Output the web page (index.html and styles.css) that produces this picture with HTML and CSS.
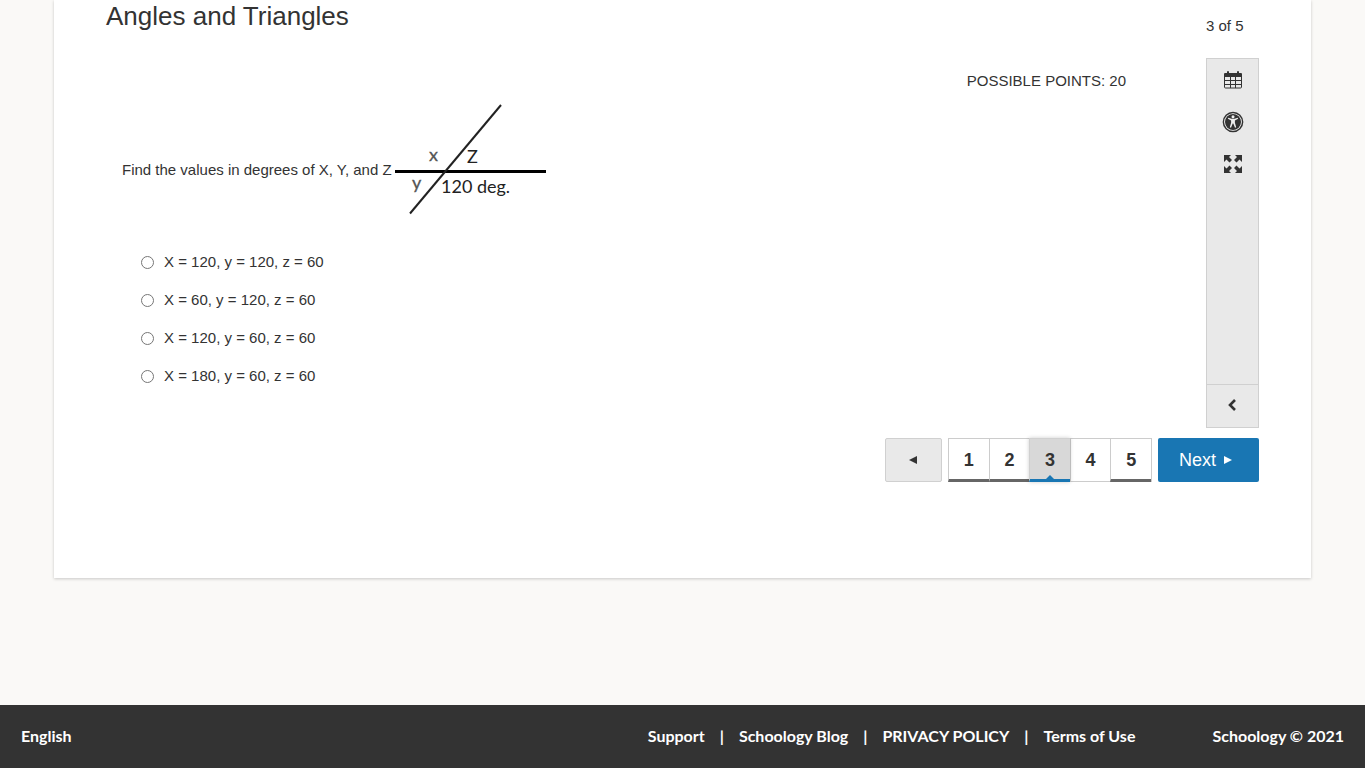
FILE: index.html
```html
<!DOCTYPE html>
<html lang="en">
<head>
    <meta charset="UTF-8">
    <meta name="viewport" content="width=device-width, initial-scale=1.0">
    <title>Angles and Triangles</title>
    <link rel="stylesheet" href="styles.css">
</head>
<body>
    <main class="card">
        <header class="card-header">
            <h1>Angles and Triangles</h1>
            <div class="progress">3 of 5</div>
        </header>
        <div class="card-body">
            <section class="question">
                <div class="points">POSSIBLE POINTS: 20</div>
                <div class="prompt">
                    <span id="prompt-text">Find the values in degrees of X, Y, and Z</span>
                    <svg class="diagram" width="151" height="132" viewBox="3 0 151 132" role="img" aria-label="Two crossing lines">
                        <path class="line" d="M3 67.5H154"/>
                        <path class="line-thin" d="M109 1L18 109.5"/>
                        <text class="mark" x="37" y="57">x</text>
                        <text x="75" y="59">Z</text>
                        <text class="mark" x="20" y="85">y</text>
                        <text x="49" y="89">120 deg.</text>
                    </svg>
                </div>
                <div class="answers" role="radiogroup" aria-labelledby="prompt-text">
                    <label><input type="radio" name="answer">X = 120, y = 120, z = 60</label>
                    <label><input type="radio" name="answer">X = 60, y = 120, z = 60</label>
                    <label><input type="radio" name="answer">X = 120, y = 60, z = 60</label>
                    <label><input type="radio" name="answer">X = 180, y = 60, z = 60</label>
                </div>
            </section>
            <aside class="toolbar">
                <button class="tool" aria-label="Calendar">
                    <svg width="18" height="18" viewBox="0 0 18 18">
                        <path fill="#333" d="M1 2h2V1q0-1 1-1t1 1v1h8V1q0-1 1-1t1 1v1h2q1 0 1 1v3H0V3q0-1 1-1z"/>
                        <path fill="none" stroke="#333" d="M.5 6v10q0 1 1 1h15q1 0 1-1V6M1 9.5h16M1 13.5h16M6.500 6v11M11.500 6v11"/>
                    </svg>
                </button>
                <button class="tool" aria-label="Accessibility">
                    <svg width="22" height="22" viewBox="0 0 22 22">
                        <circle cx="11" cy="11" r="9.600" fill="#fff" stroke="#333" stroke-width="1.500"/>
                        <circle cx="11" cy="11" r="8" fill="#333"/>
                        <circle cx="11" cy="5.800" r="1.500" fill="#eee"/>
                        <path fill="#eee" d="M6.300 6.700l3.200 1.100h3l3.200-1.100.4 1-3.200 1.700v2.300l1.300 4.600-1.200.4-1.700-4.200h-.6L9 16.700l-1.200-.4 1.300-4.600V9.400L5.900 7.700z"/>
                    </svg>
                </button>
                <button class="tool" aria-label="Full screen">
                    <svg width="18" height="18" viewBox="0 0 18 18">
                        <g fill="#333">
                            <path d="M0 0h7L5 2l3 3-2.500 2.500-3-3L0 7z"/>
                            <path d="M18 0v7l-2.500-2.500-3 3L10 5l3-3-2-2z"/>
                            <path d="M0 18v-7l2.500 2.500 3-3L8 13l-3 3 2 2z"/>
                            <path d="M18 18h-7l2-2-3-3 2.500-2.500 3 3L18 11z"/>
                        </g>
                    </svg>
                </button>
                <button class="collapse" aria-label="Collapse">
                    <svg width="10" height="12" viewBox="0 0 10 12">
                        <path fill="none" stroke="#333" stroke-width="2.600" d="M8 1L3 6l5 5"/>
                    </svg>
                </button>
            </aside>
        </div>
        <nav class="pager" aria-label="Questions">
            <button class="prev" aria-label="Previous">
                <svg width="8" height="8" viewBox="0 0 8 8"><path fill="#333" d="M8 0v8L0 4z"/></svg>
            </button>
            <div class="pages">
                <button class="done">1</button>
                <button class="done">2</button>
                <button class="current" aria-current="page">3</button>
                <button>4</button>
                <button class="done">5</button>
            </div>
            <button class="next">Next
                <svg width="8" height="8" viewBox="0 0 8 8"><path fill="#fff" d="M0 0v8l8-4z"/></svg>
            </button>
        </nav>
    </main>
    <footer class="footer">
        <a href="#">English</a>
        <nav class="links" aria-label="Footer">
            <a href="#">Support</a>
            <span>|</span>
            <a href="#">Schoology Blog</a>
            <span>|</span>
            <a href="#">PRIVACY POLICY</a>
            <span>|</span>
            <a href="#">Terms of Use</a>
        </nav>
        <div>Schoology © 2021</div>
    </footer>
</body>
</html>
```
FILE: styles.css
```css
*{
    box-sizing: border-box;
}
body{
    margin: 0;
    min-height: 100vh;
    display: flex;
    flex-direction: column;
    background-color: #faf9f7;
    color: #333;
    font-family: "Liberation Sans", Arial, sans-serif;
    font-size: 15px;
    line-height: 18px;
}
button{
    margin: 0;
    padding: 0;
    font-family: inherit;
    color: #333;
    cursor: pointer;
}
svg{
    display: block;
}
.card{
    margin: 0 54px 40px;
    padding: 0 52px 96px;
    background-color: #fff;
    box-shadow: 0 1px 3px #0003;
}
.card-header{
    display: grid;
    grid-template-columns: 1fr 53px;
    height: 58px;
}
h1{
    margin: 0;
    font-size: 26px;
    font-weight: normal;
    line-height: 32px;
}
.progress{
    padding-top: 17px;
}
.card-body{
    display: grid;
    grid-template-columns: 1fr 53px;
}
.question{
    padding: 14px 80px 33px 16px;
}
.points{
    text-align: right;
}
.prompt{
    display: flex;
    align-items: center;
    gap: 3px;
    margin: 14px 0 7px;
}
.diagram{
    font-family: Lato, "Open Sans", sans-serif;
    font-size: 18px;
    fill: #222;
}
.diagram .mark{
    fill: #555;
    stroke: #555;
    stroke-width: .3;
}
.line{
    stroke: #000;
    stroke-width: 3;
}
.line-thin{
    stroke: #222;
    stroke-width: 2;
}
.answers label{
    display: flex;
    align-items: center;
    gap: 10px;
    height: 38px;
    padding-left: 19px;
}
.answers input{
    width: 13px;
    height: 13px;
    margin: 1px 0 0;
}
.toolbar{
    display: flex;
    flex-direction: column;
    background-color: #e9e9e9;
    border: 1px solid #d0d0d0;
}
.toolbar button{
    display: flex;
    justify-content: center;
    align-items: center;
    height: 42px;
    border: none;
    background: none;
}
.toolbar .collapse{
    height: 43px;
    margin-top: auto;
    padding: 0 1px 2px 0;
    border-top: 1px solid #d0d0d0;
}
.pager{
    display: flex;
    justify-content: flex-end;
    gap: 6px;
    margin-top: 10px;
}
.prev, .next{
    display: flex;
    justify-content: center;
    align-items: center;
    height: 44px;
    border-radius: 2px;
}
.prev{
    width: 57px;
    padding-right: 2px;
    background-color: #e9e9e9;
    border: 1px solid #d0d0d0;
}
.next{
    gap: 8px;
    width: 101px;
    padding-right: 6px;
    border: none;
    background-color: #1976b3;
    color: #fff;
    font-size: 18px;
}
.pages{
    display: flex;
    width: 204px;
    border-right: 1px solid #ccc;
}
.pages button{
    flex: 1;
    height: 44px;
    background-color: #fff;
    border: solid #ccc;
    border-width: 1px 0 1px 1px;
    font-size: 18px;
    font-weight: bold;
}
.pages .done{
    padding-top: 2px;
    border-bottom: 3px solid #666;
}
.pages .current{
    position: relative;
    padding-top: 2px;
    background-color: #d8d8d8;
    border-color: #d0d0d0;
    border-bottom: 3px solid #1976b3;
    box-shadow: 0 0 4px #0003;
}
.current::after{
    content: "";
    position: absolute;
    bottom: 0;
    left: 50%;
    margin-left: -4px;
    border: 4px solid transparent;
    border-top: none;
    border-bottom-color: #1976b3;
}
.footer{
    display: flex;
    align-items: center;
    height: 63px;
    margin-top: auto;
    padding: 0 21px 2px;
    background-color: #333;
    color: #fff;
    font-family: Lato, "Open Sans", sans-serif;
    font-size: 16px;
    font-weight: bold;
}
.footer a{
    color: #fff;
    text-decoration: none;
}
.links{
    display: flex;
    gap: 15px;
    margin-left: auto;
    margin-right: 77px;
}
```
